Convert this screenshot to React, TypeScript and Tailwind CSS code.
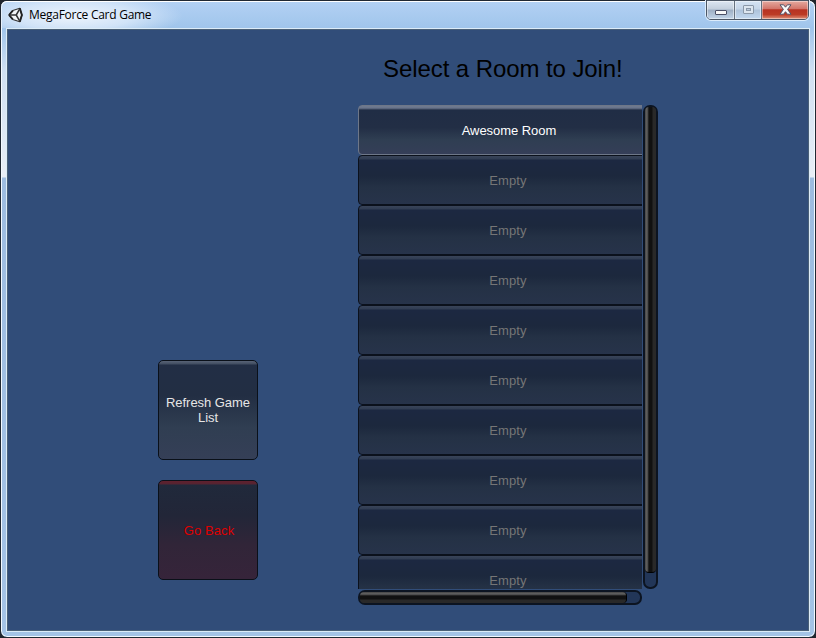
const rooms = ['Awesome Room', 'Empty', 'Empty', 'Empty', 'Empty', 'Empty', 'Empty', 'Empty', 'Empty', 'Empty'];

function UnityLogo() {
  return (
    <svg width="16" height="16" viewBox="0 0 16 16" className="mt-[6px] ml-[7px] shrink-0">
      <path d="M1 8 4.8 3.6 11.8 1.2 13.9 8 11.8 14.8 4.8 12.4Z" fill="#f4f6f8" stroke="#333" strokeWidth="1.1" strokeLinejoin="round" />
      <path d="M1 8 4.8 3.6M1 8 4.8 12.4M11.8 1.2 13.9 8 11.8 14.8" stroke="#222" strokeWidth="1.9" fill="none" />
      <path d="M2 8H8.2M8.2 8 11.6 2.2M8.2 8 11.6 13.8" stroke="#333" strokeWidth="1.5" fill="none" />
    </svg>
  );
}

function WindowButtons() {
  return (
    <div className="mr-[6px] flex h-[20px] w-[103px] shrink-0 overflow-hidden rounded-b-[5px] border border-[#4b5665] shadow-[0_0_0_1px_#dcecfb]">
      <div className="flex w-[28px] justify-center border-r border-[#65717f] bg-[linear-gradient(#dce6f2_0,#c3cfdd_45%,#9eafc4_50%,#c2d4e8_100%)] shadow-[inset_0_0_0_1px_#ffffff77]">
        <div className="mt-[9px] h-[5px] w-[12px] rounded-[1px] border border-[#4b4f65] bg-[#f8f8f8]" />
      </div>
      <div className="flex w-[27px] justify-center border-r border-[#65717f] bg-[linear-gradient(#d5e3f3_0,#c5d5e8_45%,#aec2da_50%,#c2d8f0_100%)] shadow-[inset_0_0_0_1px_#ffffff77]">
        <div className="mt-[4px] h-[9px] w-[11px] rounded-[1px] border border-[#8b98a9] bg-[#dce5ef] p-[2px]">
          <div className="h-[3px] w-full border border-[#8b98a9] bg-[#bccbdc]" />
        </div>
      </div>
      <div className="flex flex-1 justify-center bg-[linear-gradient(#e5aaa0_0,#d3766b_42%,#b73222_49%,#bc3b25_75%,#df927a_100%)] shadow-[inset_0_0_0_1px_#ffffff66]">
        <svg width="13" height="11" viewBox="0 0 13 11" className="mt-[3px]">
          <path d="M1 .8H4.6L6.5 3.2 8.4.8H12L8.6 5.4 12 10.2H8.4L6.5 7.7 4.6 10.2H1L4.4 5.4Z" fill="#fafafa" stroke="#535266" strokeWidth="1" strokeLinejoin="round" />
        </svg>
      </div>
    </div>
  );
}

function Room({ name }: { name: string }) {
  const open = name !== 'Empty';
  return (
    <div
      className={
        open
          ? 'flex h-[50px] w-[300px] shrink-0 items-center justify-center rounded-[4px] border border-[#6e7788] bg-[linear-gradient(#707b90_0,#68738a_2px,#4a566d_3px,#202d45_4px,#222e45_45%,#2f3e52_70%,#353e58_100%)] pt-[2px] pl-[2px] text-[13px] tracking-[-0.05px] text-white'
          : 'flex h-[50px] w-[300px] shrink-0 items-center justify-center rounded-[4px] border border-[#0b111c] bg-[linear-gradient(#394459_0,#303c52_3px,#1c2841_4px,#1c283d_42%,#243145_65%,#27334a_100%)] pt-[2px] text-[13px] tracking-[0.1px] text-[#767676]'
      }
    >
      <span>{name}</span>
    </div>
  );
}

export default function App() {
  return (
    <div className="h-[638px] w-[816px] overflow-hidden bg-[#20242c] font-['Liberation_Sans',Arial,sans-serif]">
      <div className="flex h-[638px] w-[816px] flex-col rounded-[7px] border border-[#202832] bg-[linear-gradient(#b3d1f4_0,#a0c5eb_27px,#d0e0f2_70px,#e8eef6_176px,#9dbce0_177px,#a4c3e6_100%)] shadow-[inset_0_0_0_1px_#f3f9ff]">
        <header className="flex h-[27px] shrink-0 rounded-t-[6px] border-t border-white bg-[radial-gradient(ellipse_110px_24px_at_72px_14px,#edf4fc_0,#dceafacc_55%,transparent_100%)]">
          <div className="-mt-px">
            <UnityLogo />
          </div>
          <span className="mt-[4px] ml-[5px] flex-1 font-['Open_Sans','Noto_Sans',sans-serif] text-[12px] leading-[17px] tracking-[-0.27px] text-black">
            MegaForce Card Game
          </span>
          <div className="-mt-[2px]">
            <WindowButtons />
          </div>
        </header>
        <main className="ml-[5px] flex h-[604px] w-[804px] shrink-0 border border-[#dcecf8] bg-[#314d79]">
          <div className="flex w-[802px] border border-[#4a6077]">
            <aside className="ml-[150px] flex w-[100px] flex-col gap-[20px] pt-[330px] text-center text-[13px] leading-[15px]">
              <button className="h-[100px] w-[100px] shrink-0 rounded-[5px] border border-[#0a1019] bg-[linear-gradient(#596477_0,#414d61_3px,#222e45_4px,#222e43_35%,#303e52_68%,#353f57_100%)] px-[4px] tracking-[-0.05px] text-[#e6e6e6]">
                Refresh Game List
              </button>
              <button className="h-[100px] w-[100px] shrink-0 rounded-[5px] border border-[#0a1019] bg-[linear-gradient(#60202d_0,#542432_3px,#20293b_4px,#222638_35%,#312538_65%,#36243a_100%)] pl-[2px] tracking-[0.1px] text-[#df0000]">
                Go Back
              </button>
            </aside>
            <section className="ml-[100px] w-[300px]">
              <h1 className="h-[75px] pt-[25px] pl-[25px] text-[24px] leading-[28px] tracking-[-0.08px] whitespace-nowrap text-black">
                Select a Room to Join!
              </h1>
              <div className="flex gap-px">
                <div className="flex h-[484px] w-[284px] flex-col overflow-hidden">
                  {rooms.map((name, index) => (
                    <Room key={index} name={name} />
                  ))}
                </div>
                <div className="h-[484px] w-[15px] rounded-[7px] border-2 border-[#0c1421] bg-[#223658]">
                  <div className="h-[466px] w-[11px] rounded-[4px] border-b border-black bg-[linear-gradient(90deg,#444_0,#656565_2px,#373737_3px,#111_4px,#111_7px,#292929_8px,#292929_100%)]" />
                </div>
              </div>
              <div className="mt-px h-[15px] w-[284px] rounded-[7px] border-2 border-[#0c1421] bg-[#223658]">
                <div className="h-[11px] w-[267px] rounded-[4px] border-r border-black bg-[linear-gradient(#444_0,#656565_2px,#373737_3px,#111_4px,#111_7px,#292929_8px,#292929_100%)]" />
              </div>
            </section>
          </div>
        </main>
      </div>
    </div>
  );
}
